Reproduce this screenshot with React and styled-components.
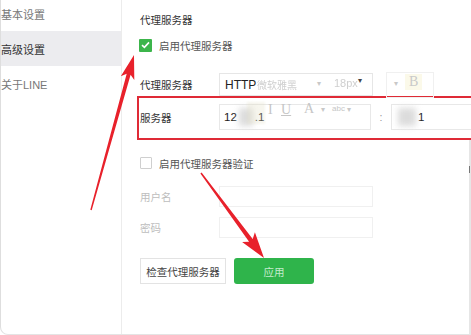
import React from 'react';
import styled, { createGlobalStyle, css } from 'styled-components';

const GlobalStyle = createGlobalStyle`
  html, body {
    margin: 0;
    padding: 0;
    background: #fff;
  }
  body {
    font-family: "Liberation Sans", "Noto Sans CJK SC", sans-serif;
  }
`;

// arrow polygon: tapered shaft + swept-back head
const arrowPoints = (x1, y1, x2, y2, headLen, headW, tailW, neckW) => {
  const dx = x2 - x1;
  const dy = y2 - y1;
  const len = Math.hypot(dx, dy);
  const ux = dx / len;
  const uy = dy / len;
  const px = -uy;
  const py = ux;
  const bx = x2 - ux * headLen;
  const by = y2 - uy * headLen;
  const barbX = bx - ux * 4;
  const barbY = by - uy * 4;
  const pts = [
    [x1 + (px * tailW) / 2, y1 + (py * tailW) / 2],
    [bx + (px * neckW) / 2, by + (py * neckW) / 2],
    [barbX + (px * headW) / 2, barbY + (py * headW) / 2],
    [x2, y2],
    [barbX - (px * headW) / 2, barbY - (py * headW) / 2],
    [bx - (px * neckW) / 2, by - (py * neckW) / 2],
    [x1 - (px * tailW) / 2, y1 - (py * tailW) / 2],
  ];
  return pts.map((p) => p.map((v) => v.toFixed(1)).join(',')).join(' ');
};

const App = () => {
  return (
    <>
      <GlobalStyle />
      <Frame>
        <Sidebar>
          <NavItem>基本设置</NavItem>
          <NavItem $active>高级设置</NavItem>
          <NavItem>关于LINE</NavItem>
        </Sidebar>

        <Main>
          <Heading>代理服务器</Heading>

          <CheckRow>
            <CheckBox $checked>
              <svg width="9" height="8" viewBox="0 0 9 8">
                <path d="M1 4.2 L3.4 6.4 L8 1.4" fill="none" stroke="#fff" strokeWidth="1.6" />
              </svg>
            </CheckBox>
            <CheckLabel>启用代理服务器</CheckLabel>
          </CheckRow>

          <FieldRow $top={20}>
            <FieldLabel>代理服务器</FieldLabel>
            <SelectBox>HTTP</SelectBox>
          </FieldRow>

          <Highlight>
            <FieldRow>
              <FieldLabel>服务器</FieldLabel>
              <TextBox $width={152}>
                12<Blur $w={14} />.1
              </TextBox>
              <Colon>:</Colon>
              <TextBox $width={82}>
                <Blur $w={18} />1
              </TextBox>
            </FieldRow>
          </Highlight>

          <CheckRow $top={15}>
            <CheckBox />
            <CheckLabel>启用代理服务器验证</CheckLabel>
          </CheckRow>

          <FieldRow $top={15}>
            <FieldLabel $muted>用户名</FieldLabel>
            <FaintBox />
          </FieldRow>

          <FieldRow $top={10}>
            <FieldLabel $muted>密码</FieldLabel>
            <FaintBox />
          </FieldRow>

          <ButtonRow>
            <GhostButton>检查代理服务器</GhostButton>
            <ApplyButton>应用</ApplyButton>
          </ButtonRow>
        </Main>

        <ScrollTrack>
          <ScrollMark />
        </ScrollTrack>

        {/* editor toolbar bleeding through the screenshot */}
        <ToolbarGhost>
          <GhostText style={{ left: 256, top: 77 }}>微软雅黑</GhostText>
          <Caret style={{ left: 316, top: 79 }}>▾</Caret>
          <GhostText $latin style={{ left: 333, top: 77 }}>18px</GhostText>
          <Caret $dark style={{ left: 357, top: 76 }}>▾</Caret>
          <GhostBox />
          <Caret style={{ left: 393, top: 79 }}>▾</Caret>
          <BoldGlyph>B</BoldGlyph>
          <Smudge />
          <SerifGlyph style={{ left: 267, top: 102 }}>I</SerifGlyph>
          <SerifGlyph $underline style={{ left: 280, top: 102 }}>U</SerifGlyph>
          <SerifGlyph style={{ left: 303, top: 101 }}>A</SerifGlyph>
          <Caret style={{ left: 320, top: 105 }}>▾</Caret>
          <SmallGlyph>abc</SmallGlyph>
          <Caret style={{ left: 346, top: 105 }}>▾</Caret>
        </ToolbarGhost>

        <Arrows width="471" height="335" viewBox="0 0 471 335">
          <polygon points={arrowPoints(90, 210, 133, 55, 20, 14, 1.5, 4)} />
          <polygon points={arrowPoints(200, 173, 263, 258, 22, 16, 1.5, 4.5)} />
        </Arrows>
      </Frame>
    </>
  );
};

export default App;

const Frame = styled.div`
  position: relative;
  width: 471px;
  height: 335px;
  box-sizing: border-box;
  display: flex;
  overflow: hidden;
  background: #fff;
  border-left: 1px solid #dedede;
  border-bottom: 1px solid #e4e4e4;
  border-bottom-left-radius: 8px;
`;

const Sidebar = styled.div`
  width: 120px;
  flex-shrink: 0;
  border-right: 1px solid #ececec;
  display: flex;
  flex-direction: column;
  margin-top: -4px;
`;

const NavItem = styled.div`
  height: 35px;
  display: flex;
  align-items: center;
  font-size: 11px;
  color: #777;
  padding-left: 0;

  ${(p) =>
    p.$active &&
    css`
      background: #ececef;
      color: #333;
    `}
`;

const Main = styled.div`
  flex: 1;
  display: flex;
  flex-direction: column;
  padding: 12px 0 0 18px;
  font-size: 10.5px;
  color: #333;
`;

const Heading = styled.div`
  height: 16px;
  line-height: 16px;
  color: #333;
`;

const CheckRow = styled.div`
  display: flex;
  align-items: center;
  height: 16px;
  margin-top: ${(p) => p.$top ?? 9}px;
`;

const CheckBox = styled.span`
  width: 12px;
  height: 12px;
  box-sizing: border-box;
  border: 1px solid #cfcfcf;
  border-radius: 1px;
  display: flex;
  align-items: center;
  justify-content: center;
  margin-right: 7px;

  ${(p) =>
    p.$checked &&
    css`
      width: 13px;
      height: 13px;
      margin-left: -1px;
      border: none;
      background: #3cb54b;
    `}
`;

const CheckLabel = styled.span`
  color: #555;
`;

const FieldRow = styled.div`
  display: flex;
  align-items: center;
  margin-top: ${(p) => p.$top ?? 0}px;
`;

const FieldLabel = styled.div`
  width: 79px;
  flex-shrink: 0;
  color: ${(p) => (p.$muted ? '#bdbdbd' : '#333')};
`;

const SelectBox = styled.div`
  width: 154px;
  height: 23px;
  box-sizing: border-box;
  border: 1px solid #e6e6e6;
  display: flex;
  align-items: center;
  padding-left: 5px;
  font-size: 12px;
  color: #222;
`;

const Highlight = styled.div`
  margin-left: -3px;
  margin-right: 1px;
  height: 44px;
  box-sizing: border-box;
  border: 2px solid #df2a36;
  padding: 6px 0 0 1px;
`;

const TextBox = styled.div`
  width: ${(p) => p.$width}px;
  height: 26px;
  box-sizing: border-box;
  border: 1px solid #e8e8e8;
  display: flex;
  align-items: center;
  padding-left: 4px;
  font-size: 11.5px;
  color: #222;
`;

const Blur = styled.span`
  display: inline-block;
  width: ${(p) => p.$w}px;
  height: 18px;
  margin: 0 2px;
  background: #dcdcdc;
  filter: blur(3px);
`;

const Colon = styled.span`
  width: 20px;
  text-align: center;
  color: #999;
`;

const FaintBox = styled.div`
  width: 154px;
  height: 21px;
  box-sizing: border-box;
  border: 1px solid #f0f0f0;
`;

const ButtonRow = styled.div`
  display: flex;
  gap: 8px;
  margin-top: 20px;
`;

const GhostButton = styled.button`
  width: 86px;
  height: 26px;
  padding: 0;
  border: 1px solid #e3e3e3;
  background: #fff;
  font: inherit;
  color: #444;
`;

const ApplyButton = styled.button`
  width: 80px;
  height: 26px;
  padding: 0;
  border: none;
  border-radius: 3px;
  background: #2fb44b;
  font: inherit;
  color: #c2ebcb;
`;

const ScrollTrack = styled.div`
  position: absolute;
  right: 0;
  top: 140px;
  bottom: 0;
  width: 2px;
  background: #e6e6e6;
`;

const ScrollMark = styled.div`
  margin-top: 26px;
  width: 1px;
  height: 7px;
  background: #777;
`;

const ToolbarGhost = styled.div`
  position: absolute;
  inset: 0;
  pointer-events: none;
`;

const GhostText = styled.span`
  position: absolute;
  font-size: ${(p) => (p.$latin ? '11px' : '10px')};
  color: #cfcfcf;
  filter: blur(0.4px);
`;

const Caret = styled.span`
  position: absolute;
  font-size: 8px;
  color: ${(p) => (p.$dark ? '#444' : '#c8c8c8')};
`;

const GhostBox = styled.div`
  position: absolute;
  left: 385px;
  top: 72px;
  width: 46px;
  height: 24px;
  border: 1px solid #f0f0f0;
`;

const BoldGlyph = styled.span`
  position: absolute;
  left: 404px;
  top: 74px;
  padding: 0 4px;
  background: #fbf9e9;
  font-family: "Liberation Serif", serif;
  font-size: 14px;
  color: #c9c9c9;
`;

const Smudge = styled.div`
  position: absolute;
  left: 246px;
  top: 102px;
  width: 18px;
  height: 22px;
  background: rgba(230, 226, 200, 0.3);
  filter: blur(1px);
`;

const SerifGlyph = styled.span`
  position: absolute;
  font-family: "Liberation Serif", serif;
  font-size: 14px;
  color: #c6c6c6;
  text-decoration: ${(p) => (p.$underline ? 'underline' : 'none')};
`;

const SmallGlyph = styled.span`
  position: absolute;
  left: 331px;
  top: 104px;
  font-size: 8px;
  color: #c6c6c6;
`;

const Arrows = styled.svg`
  position: absolute;
  left: 0;
  top: 0;
  pointer-events: none;

  polygon {
    fill: #e8212b;
  }
`;
